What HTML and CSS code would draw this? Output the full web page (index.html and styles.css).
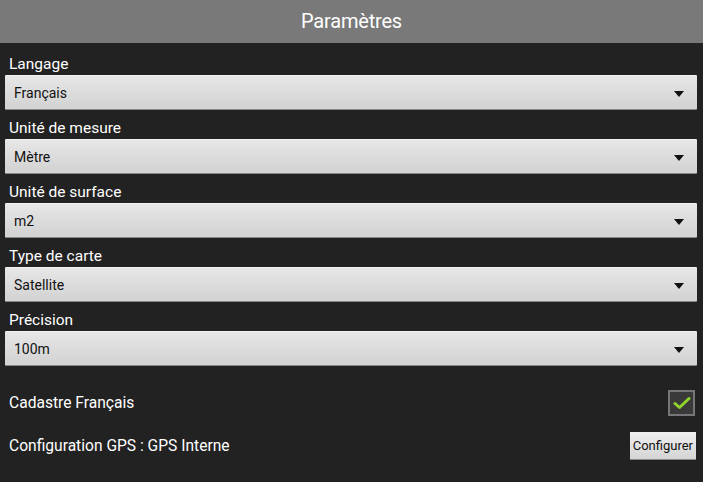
FILE: index.html
```html
<!DOCTYPE html>
<html>
<head>
    <title>Paramètres</title>
    <meta name="viewport" content="width=device-width, initial-scale=1">
    <link rel="stylesheet" href="styles.css">
</head>
<body>
    <div class="titleBar">Paramètres</div>

    <div class="settings">
        <div class="field">
            <div class="fieldLabel">Langage</div>
            <div class="spinner"><span>Français</span><span class="arrow"></span></div>
        </div>
        <div class="field">
            <div class="fieldLabel">Unité de mesure</div>
            <div class="spinner"><span>Mètre</span><span class="arrow"></span></div>
        </div>
        <div class="field">
            <div class="fieldLabel">Unité de surface</div>
            <div class="spinner"><span>m2</span><span class="arrow"></span></div>
        </div>
        <div class="field">
            <div class="fieldLabel">Type de carte</div>
            <div class="spinner"><span>Satellite</span><span class="arrow"></span></div>
        </div>
        <div class="field">
            <div class="fieldLabel">Précision</div>
            <div class="spinner"><span>100m</span><span class="arrow"></span></div>
        </div>

        <div class="optionRow cadastreRow">
            <span>Cadastre Français</span>
            <span class="checkBox">
                <svg width="18" height="14" viewBox="0 0 18 14">
                    <path d="M2 7.5 L6.5 11.5 L16 2.5" fill="none" stroke="#8ed42c" stroke-width="3" stroke-linecap="round" stroke-linejoin="round"/>
                </svg>
            </span>
        </div>
        <div class="optionRow gpsRow">
            <span>Configuration GPS : GPS Interne</span>
            <button class="configBtn">Configurer</button>
        </div>
    </div>
</body>
</html>
```

FILE: styles.css
```css
body
{
    margin: 0;
    background: #222222;
    font-family: Roboto, "Noto Sans", sans-serif;
    color: #ffffff;
    height: 482px;
    overflow: hidden;
}

.titleBar
{
    height: 43px;
    line-height: 43px;
    background: #797979;
    text-align: center;
    font-size: 20px;
    letter-spacing: -0.2px;
}

.settings
{
    padding: 0 6px 0 5px;
}

.field
{
    display: flex;
    flex-direction: column;
}

.fieldLabel
{
    height: 32px;
    display: flex;
    align-items: flex-end;
    line-height: 18px;
    padding: 0 0 2px 4px;
    font-size: 15.5px;
    box-sizing: border-box;
}

.field + .field .fieldLabel
{
    height: 29px;
}

.spinner
{
    height: 35px;
    display: flex;
    align-items: center;
    justify-content: space-between;
    padding: 0 13px 0 9px;
    background: linear-gradient(#e6e6e6, #d2d2d2);
    border-top: 1px solid #f2f2f2;
    border-bottom: 1px solid #8a8a8a;
    box-sizing: border-box;
    color: #111111;
    font-size: 14px;
    border-radius: 1px;
}

.arrow
{
    width: 0;
    height: 0;
    border-left: 5px solid transparent;
    border-right: 5px solid transparent;
    border-top: 6px solid #111111;
    margin-top: 2px;
}

.optionRow
{
    display: flex;
    align-items: center;
    justify-content: space-between;
    padding-left: 4px;
    font-size: 15.6px;
}

.cadastreRow
{
    margin-top: 24px;
    height: 26px;
}

.gpsRow
{
    margin-top: 16px;
    height: 28px;
}

.checkBox
{
    width: 27px;
    height: 26px;
    box-sizing: border-box;
    border: 2px solid #767676;
    background: #393939;
    display: flex;
    align-items: center;
    justify-content: center;
    margin-right: 2px;
}

.configBtn
{
    height: 28px;
    padding: 0 3px;
    background: linear-gradient(#f0f0f0, #d4d4d4);
    border: none;
    border-bottom: 1px solid #8a8a8a;
    font-family: Roboto, "Noto Sans", sans-serif;
    font-size: 13px;
    color: #111111;
    margin-right: 1px;
}
```
